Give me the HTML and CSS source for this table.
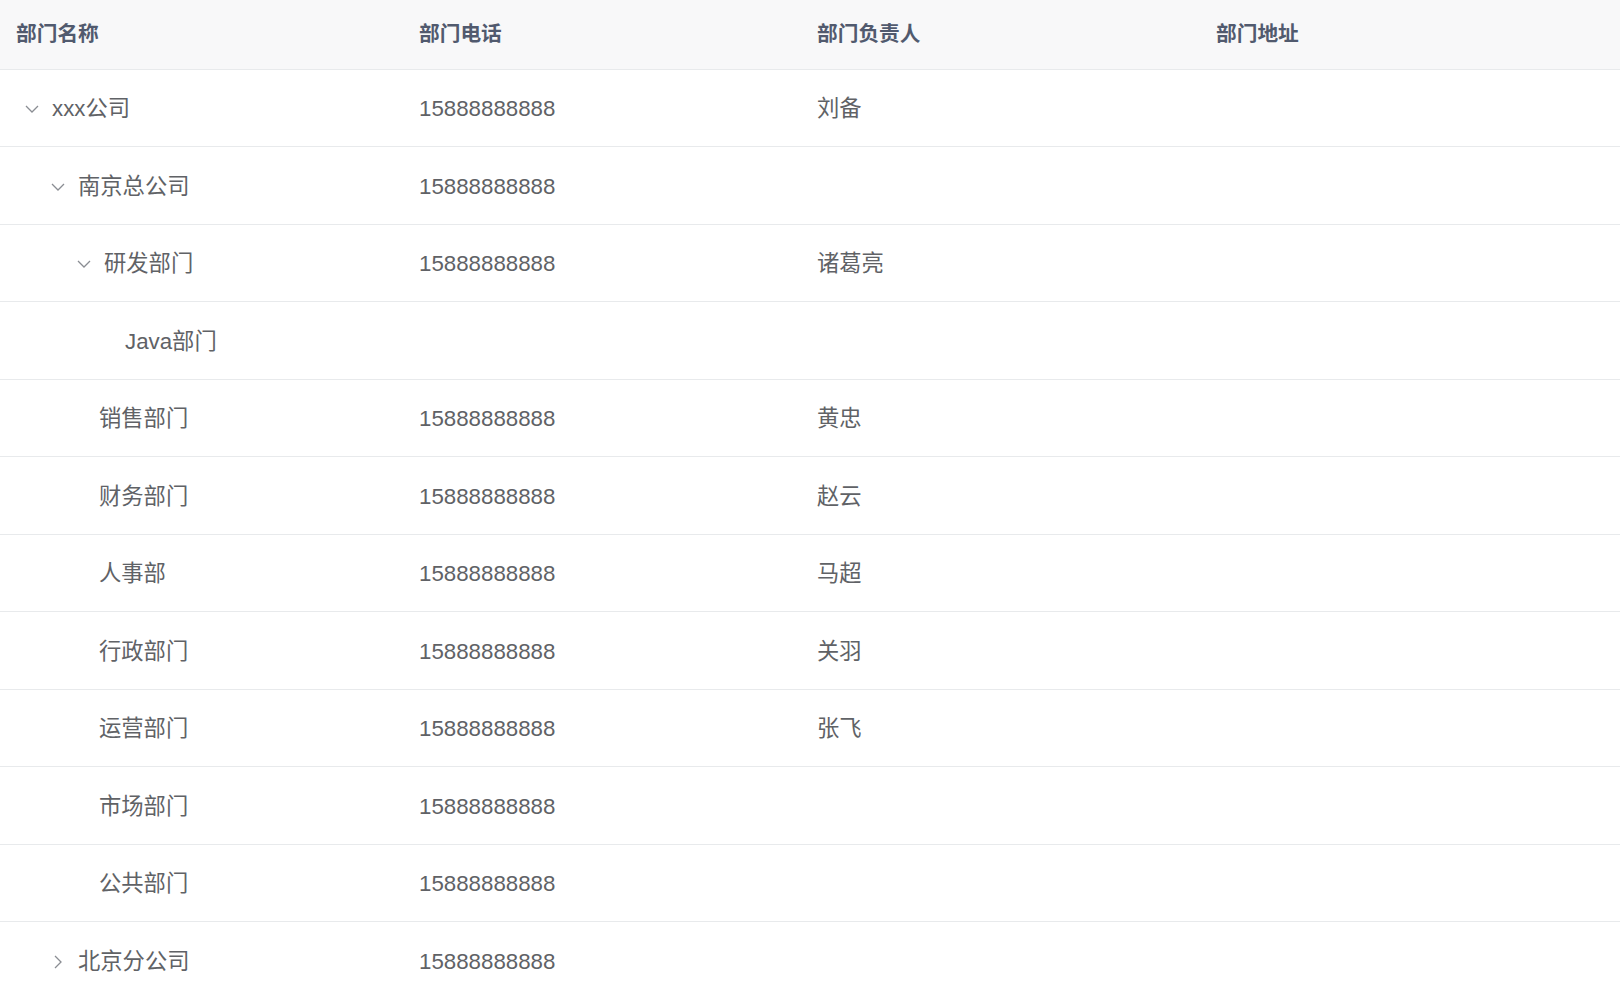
FILE: index.html
```html
<!DOCTYPE html>
<html lang="zh-CN">
<head>
<meta charset="utf-8">
<title>部门</title>
<link rel="stylesheet" href="styles.css">
</head>
<body>
<table class="tree-table">
  <colgroup>
    <col class="c1"><col class="c2"><col class="c3"><col class="c4">
  </colgroup>
  <thead>
    <tr><th>部门名称</th><th>部门电话</th><th>部门负责人</th><th>部门地址</th></tr>
  </thead>
  <tbody>
    <tr><td><span class="lv0"></span><span class="ico down"><svg viewBox="0 0 14 8" width="14" height="8"><path d="M1 1 L7 7 L13 1" /></svg></span>xxx公司</td><td>15888888888</td><td>刘备</td><td></td></tr>
    <tr><td><span class="lv1"></span><span class="ico down"><svg viewBox="0 0 14 8" width="14" height="8"><path d="M1 1 L7 7 L13 1" /></svg></span>南京总公司</td><td>15888888888</td><td></td><td></td></tr>
    <tr><td><span class="lv2"></span><span class="ico down"><svg viewBox="0 0 14 8" width="14" height="8"><path d="M1 1 L7 7 L13 1" /></svg></span>研发部门</td><td>15888888888</td><td>诸葛亮</td><td></td></tr>
    <tr><td><span class="lv3"></span><span class="ph"></span>Java部门</td><td></td><td></td><td></td></tr>
    <tr><td><span class="lv2"></span><span class="ph"></span>销售部门</td><td>15888888888</td><td>黄忠</td><td></td></tr>
    <tr><td><span class="lv2"></span><span class="ph"></span>财务部门</td><td>15888888888</td><td>赵云</td><td></td></tr>
    <tr><td><span class="lv2"></span><span class="ph"></span>人事部</td><td>15888888888</td><td>马超</td><td></td></tr>
    <tr><td><span class="lv2"></span><span class="ph"></span>行政部门</td><td>15888888888</td><td>关羽</td><td></td></tr>
    <tr><td><span class="lv2"></span><span class="ph"></span>运营部门</td><td>15888888888</td><td>张飞</td><td></td></tr>
    <tr><td><span class="lv2"></span><span class="ph"></span>市场部门</td><td>15888888888</td><td></td><td></td></tr>
    <tr><td><span class="lv2"></span><span class="ph"></span>公共部门</td><td>15888888888</td><td></td><td></td></tr>
    <tr><td><span class="lv1"></span><span class="ico right"><svg viewBox="0 0 8 14" width="8" height="14"><path d="M1 1 L7 7 L1 13" /></svg></span>北京分公司</td><td>15888888888</td><td></td><td></td></tr>
  </tbody>
</table>
</body>
</html>
```

FILE: styles.css
```css
html, body {
  margin: 0;
  padding: 0;
  background: #ffffff;
}
body {
  font-family: "Liberation Sans", "Noto Sans CJK SC", sans-serif;
  overflow: hidden;
}
.tree-table {
  width: 1620px;
  border-collapse: collapse;
  table-layout: fixed;
}
.c1 { width: 403px; }
.c2 { width: 398px; }
.c3 { width: 399px; }
.c4 { width: 420px; }
.tree-table th {
  height: 69px;
  box-sizing: border-box;
  background: #f8f8f9;
  color: #515a6e;
  font-size: 20.7px;
  line-height: 28px;
  font-weight: bold;
  text-align: left;
  padding: 0 16px;
  border-bottom: 1px solid #e8eaec;
  vertical-align: middle;
}
.tree-table td {
  height: 77.5px;
  box-sizing: border-box;
  padding: 3px 16px 0;
  color: #606266;
  font-size: 22.3px;
  line-height: 30px;
  border-bottom: 1px solid #e8eaec;
  vertical-align: middle;
  white-space: nowrap;
}
.tree-table tbody tr:last-child td {
  border-bottom: none;
}
.lv0, .lv1, .lv2, .lv3 {
  display: inline-block;
  height: 1px;
  vertical-align: middle;
}
.lv0 { width: 0; }
.lv1 { width: 26px; }
.lv2 { width: 52px; }
.lv3 { width: 78px; }
.ico {
  display: inline-flex;
  align-items: center;
  justify-content: center;
  width: 31px;
  height: 22px;
  margin-right: 5px;
  vertical-align: middle;
  position: relative;
  top: -1px;
}
.ico svg path {
  fill: none;
  stroke: #8a8d93;
  stroke-width: 1.3;
}
.ph {
  display: inline-block;
  width: 31px;
  height: 1px;
  vertical-align: middle;
}
```
